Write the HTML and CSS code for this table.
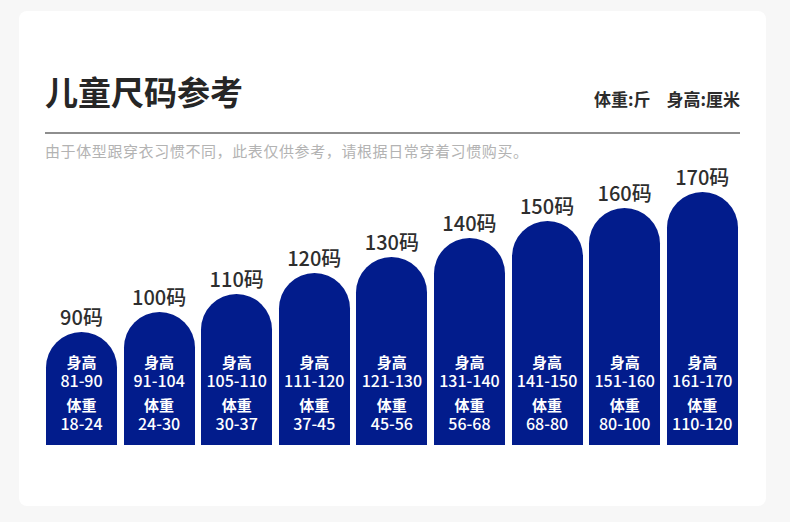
FILE: index.html
```html
<!DOCTYPE html>
<html lang="zh-CN">
<head>
<meta charset="utf-8">
<title>儿童尺码参考</title>
<link rel="stylesheet" href="styles.css">
</head>
<body>
<div class="card">
  <div class="header">
    <h1 class="title">儿童尺码参考</h1>
    <div class="units"><span>体重:斤</span><span class="unit-gap">身高:厘米</span></div>
  </div>
  <p class="note">由于体型跟穿衣习惯不同，此表仅供参考，请根据日常穿着习惯购买。</p>
  <div class="chart">
    <div class="col"><div class="size">90码</div><div class="bar" style="height:113px"><div class="grp"><span class="k">身高</span><span class="v">81-90</span></div><div class="grp"><span class="k">体重</span><span class="v">18-24</span></div></div></div>
    <div class="col"><div class="size">100码</div><div class="bar" style="height:133px"><div class="grp"><span class="k">身高</span><span class="v">91-104</span></div><div class="grp"><span class="k">体重</span><span class="v">24-30</span></div></div></div>
    <div class="col"><div class="size">110码</div><div class="bar" style="height:151px"><div class="grp"><span class="k">身高</span><span class="v">105-110</span></div><div class="grp"><span class="k">体重</span><span class="v">30-37</span></div></div></div>
    <div class="col"><div class="size">120码</div><div class="bar" style="height:172px"><div class="grp"><span class="k">身高</span><span class="v">111-120</span></div><div class="grp"><span class="k">体重</span><span class="v">37-45</span></div></div></div>
    <div class="col"><div class="size">130码</div><div class="bar" style="height:188px"><div class="grp"><span class="k">身高</span><span class="v">121-130</span></div><div class="grp"><span class="k">体重</span><span class="v">45-56</span></div></div></div>
    <div class="col"><div class="size">140码</div><div class="bar" style="height:207px"><div class="grp"><span class="k">身高</span><span class="v">131-140</span></div><div class="grp"><span class="k">体重</span><span class="v">56-68</span></div></div></div>
    <div class="col"><div class="size">150码</div><div class="bar" style="height:224px"><div class="grp"><span class="k">身高</span><span class="v">141-150</span></div><div class="grp"><span class="k">体重</span><span class="v">68-80</span></div></div></div>
    <div class="col"><div class="size">160码</div><div class="bar" style="height:237px"><div class="grp"><span class="k">身高</span><span class="v">151-160</span></div><div class="grp"><span class="k">体重</span><span class="v">80-100</span></div></div></div>
    <div class="col"><div class="size">170码</div><div class="bar" style="height:253px"><div class="grp"><span class="k">身高</span><span class="v">161-170</span></div><div class="grp"><span class="k">体重</span><span class="v">110-120</span></div></div></div>
  </div>
</div>
</body>
</html>
```
FILE: styles.css
```css
* { box-sizing: border-box; }
html, body { margin: 0; padding: 0; }
body {
  width: 790px;
  height: 522px;
  background: #f7f7f7;
  font-family: "Noto Sans CJK SC", "Noto Sans", sans-serif;
  overflow: hidden;
  padding: 11px 0 0 19px;
}
.card {
  width: 747px;
  height: 495px;
  background: #ffffff;
  border-radius: 8px;
  padding: 60px 26px 0 26px;
}
.header {
  display: flex;
  justify-content: space-between;
  align-items: flex-end;
  padding-bottom: 21px;
  border-bottom: 2px solid #8e8e8e;
}
.title {
  margin: 0;
  font-size: 33px;
  line-height: 40px;
  font-weight: 700;
  color: #262626;
}
.units {
  font-size: 17px;
  line-height: 24px;
  font-weight: 700;
  color: #2c2c2c;
  display: flex;
}
.unit-gap { margin-left: 16px; }
.note {
  margin: 7px 0 0 0;
  font-size: 15px;
  line-height: 20px;
  letter-spacing: 0.6px;
  color: #b3b3b3;
}
.chart {
  height: 284px;
  margin-left: 1px;
  display: grid;
  grid-template-columns: repeat(9, 71px);
  column-gap: 6.6px;
  align-items: end;
}
.col {
  display: flex;
  flex-direction: column;
  align-items: center;
}
.size {
  font-size: 20px;
  line-height: 22px;
  margin-bottom: 4px;
  font-weight: 500;
  color: #2e2e2e;
  white-space: nowrap;
}
.bar {
  width: 71px;
  background: #021c8c;
  border-radius: 35.5px 35.5px 0 0;
  display: flex;
  flex-direction: column;
  justify-content: flex-end;
  align-items: center;
  padding-bottom: 12px;
  color: #ffffff;
}
.grp {
  display: flex;
  flex-direction: column;
  align-items: center;
}
.grp + .grp { margin-top: 5px; }
.k {
  font-size: 15px;
  line-height: 19px;
  font-weight: 700;
}
.v {
  font-size: 16px;
  line-height: 19px;
  font-weight: 500;
  white-space: nowrap;
}
```
